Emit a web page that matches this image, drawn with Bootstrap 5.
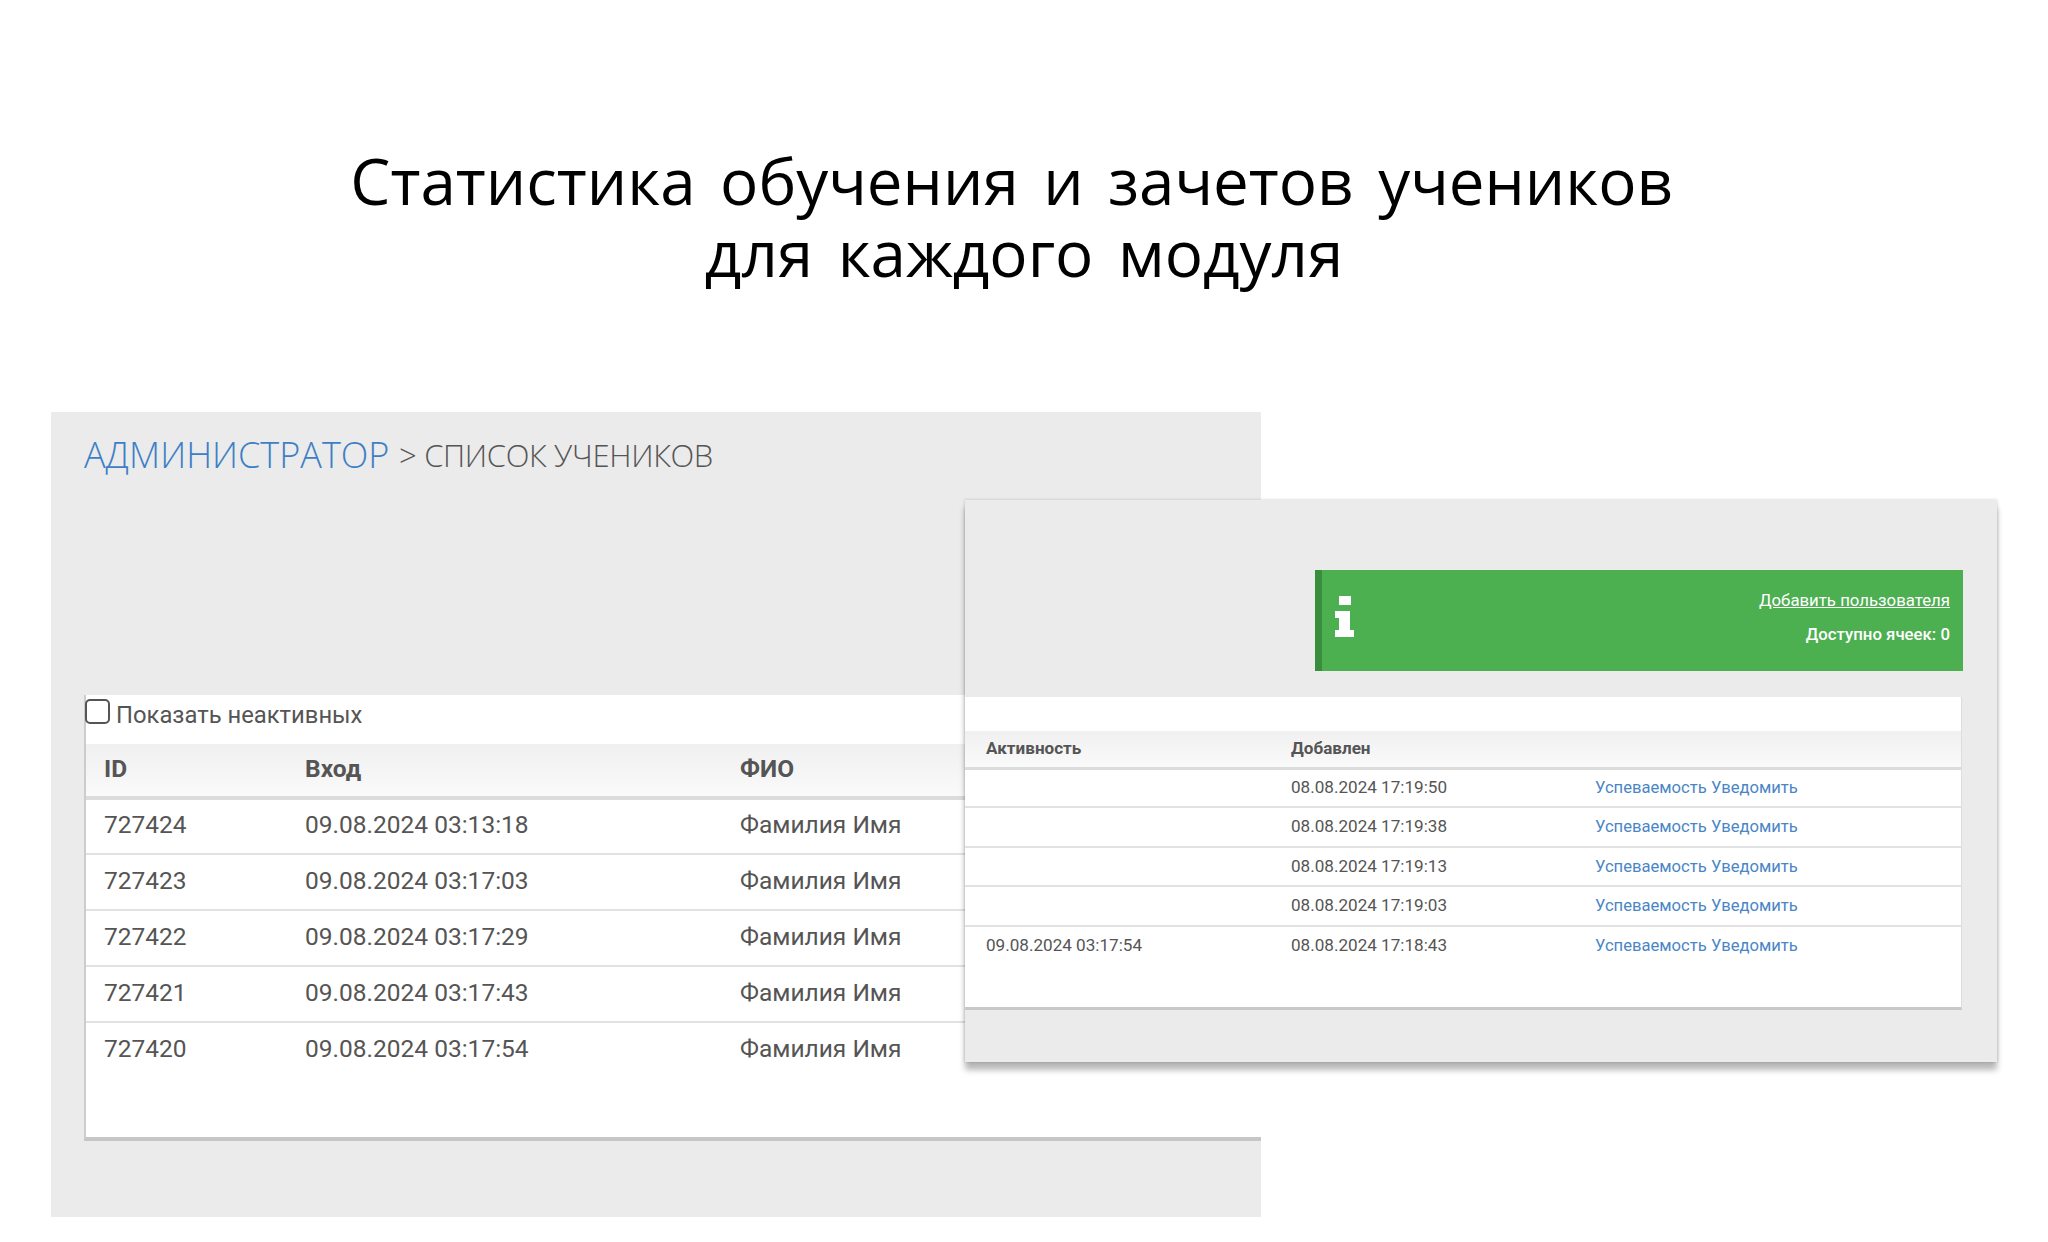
<!DOCTYPE html>
<html lang="ru">
<head>
<meta charset="utf-8">
<title>Статистика</title>
<link href="https://cdn.jsdelivr.net/npm/bootstrap@5.3.0/dist/css/bootstrap.min.css" rel="stylesheet">
<style>
body{background:#fff;margin:0;overflow:hidden;font-family:Roboto,"Liberation Sans",sans-serif}
.hero{padding-top:145px;height:412px;margin:0}
.hero h1{font-family:"Open Sans","Noto Sans",sans-serif;font-weight:400;font-size:63.7px;line-height:72px;color:#000;word-spacing:8px;margin:0}
.stage{position:relative;margin-left:51px;width:1210px;height:805px}
.backpanel{background:#ebebeb;height:805px;padding:0 0 0 33px}
.crumb{font-family:"Open Sans",sans-serif;font-weight:300;font-size:31px;line-height:48px;color:#555;padding-top:19px;height:283px;margin:0;letter-spacing:-.35px}
.crumb a{color:#3d7fc6;text-decoration:none;font-size:36px;letter-spacing:0;margin-right:2px}
.crumb span{vertical-align:1px}
.bigcard{background:#fff;border-left:2px solid #ccc;border-bottom:4px solid #c6c6c6;height:446px}
.showrow{height:49px;font-size:23.8px;color:#555;margin-left:-1px}
.showrow .form-check-input{width:25px;height:25px;margin:0;border:2px solid #555;border-radius:5px;background-color:#fff}
.showrow label{margin-top:-1px;margin-left:-2px}
.dtable{table-layout:fixed;--bs-table-bg:transparent;margin:0;color:#555}
.dtable th,.dtable td{vertical-align:middle;font-weight:400;color:#555}
.dtable th{font-weight:700;background:linear-gradient(#f0f0f0,#fafafa)}
.bigt{font-size:24.5px}
.bigt th,.bigt td{padding:0 0 2px 18px}
.bigt th{height:54px;border-bottom:4px solid #dcdcdc}
.bigt td{height:56px;border-bottom:2px solid #e2e2e2}
.bigt tr:last-child td{border-bottom:0}
.frontpanel{position:absolute;left:914px;top:88px;width:1032px;height:562px;background:#ebebeb;box-shadow:0 8px 6px rgba(0,0,0,.28),0 0 3px rgba(0,0,0,.2);padding-top:70px}
.notice{margin-left:350px;width:648px;height:101px;background:#4caf50;border-left:7px solid #388e3c;color:#fff;font-size:16.8px;font-weight:500;padding:0 13px 8px 13px}
.notice a{color:#fff;font-weight:400}
.notice svg{margin-top:-2px}
.notice p{margin:0;line-height:20px}
.notice .infolines{gap:14px}
.smallcard{margin-top:26px;width:997px;height:313px;background:#fff;border-bottom:3px solid #c8c8c8;border-right:1px solid #ddd;padding-top:34px}
.smt{font-size:17.1px}
.smt th,.smt td{padding:0 0 0 21px}
.smt th{height:37px;border-bottom:3px solid #dcdcdc}
.smt td{height:39.4px;border-bottom:2px solid #e2e2e2}
.smt tr:last-child td{border-bottom:0}
.smt a{color:#4a86c5;text-decoration:none;font-size:16.6px}
</style>
</head>
<body>
<div class="hero text-center">
  <h1>Статистика обучения и зачетов учеников&nbsp;<br>для каждого модуля</h1>
</div>
<div class="stage">
  <section class="backpanel">
    <h2 class="crumb"><a href="#">АДМИНИСТРАТОР</a> <span>&gt; СПИСОК УЧЕНИКОВ</span></h2>
    <div class="bigcard">
      <div class="showrow d-flex align-items-start gap-2 pt-1">
        <input class="form-check-input" type="checkbox" id="inactive">
        <label for="inactive">Показать неактивных</label>
      </div>
      <table class="table dtable bigt">
        <colgroup><col style="width:201px"><col style="width:435px"><col></colgroup>
        <thead><tr><th>ID</th><th>Вход</th><th>ФИО</th></tr></thead>
        <tbody>
          <tr><td>727424</td><td>09.08.2024 03:13:18</td><td>Фамилия Имя</td></tr>
          <tr><td>727423</td><td>09.08.2024 03:17:03</td><td>Фамилия Имя</td></tr>
          <tr><td>727422</td><td>09.08.2024 03:17:29</td><td>Фамилия Имя</td></tr>
          <tr><td>727421</td><td>09.08.2024 03:17:43</td><td>Фамилия Имя</td></tr>
          <tr><td>727420</td><td>09.08.2024 03:17:54</td><td>Фамилия Имя</td></tr>
        </tbody>
      </table>
    </div>
  </section>
  <section class="frontpanel">
    <div class="notice d-flex justify-content-between align-items-center">
      <svg width="20" height="42" viewBox="0 0 20 42" aria-hidden="true"><path fill="#fff" d="M4 1.500Q4 1 4.500 1H15.500Q16 1 16 1.500V9.500Q16 10 15.500 10H4.500Q4 10 4 9.500ZM0 16H15V35H19V42H0V35H4V23H0Z"/></svg>
      <div class="text-end d-flex flex-column infolines">
        <p><a href="#">Добавить пользователя</a></p>
        <p>Доступно ячеек: 0</p>
      </div>
    </div>
    <div class="smallcard">
      <table class="table dtable smt">
        <colgroup><col style="width:305px"><col style="width:304px"><col></colgroup>
        <thead><tr><th>Активность</th><th>Добавлен</th><th></th></tr></thead>
        <tbody>
          <tr><td></td><td>08.08.2024 17:19:50</td><td><a href="#">Успеваемость</a> <a href="#">Уведомить</a></td></tr>
          <tr><td></td><td>08.08.2024 17:19:38</td><td><a href="#">Успеваемость</a> <a href="#">Уведомить</a></td></tr>
          <tr><td></td><td>08.08.2024 17:19:13</td><td><a href="#">Успеваемость</a> <a href="#">Уведомить</a></td></tr>
          <tr><td></td><td>08.08.2024 17:19:03</td><td><a href="#">Успеваемость</a> <a href="#">Уведомить</a></td></tr>
          <tr><td>09.08.2024 03:17:54</td><td>08.08.2024 17:18:43</td><td><a href="#">Успеваемость</a> <a href="#">Уведомить</a></td></tr>
        </tbody>
      </table>
    </div>
  </section>
</div>
<script src="https://cdn.jsdelivr.net/npm/bootstrap@5.3.0/dist/js/bootstrap.bundle.min.js"></script>
</body>
</html>
